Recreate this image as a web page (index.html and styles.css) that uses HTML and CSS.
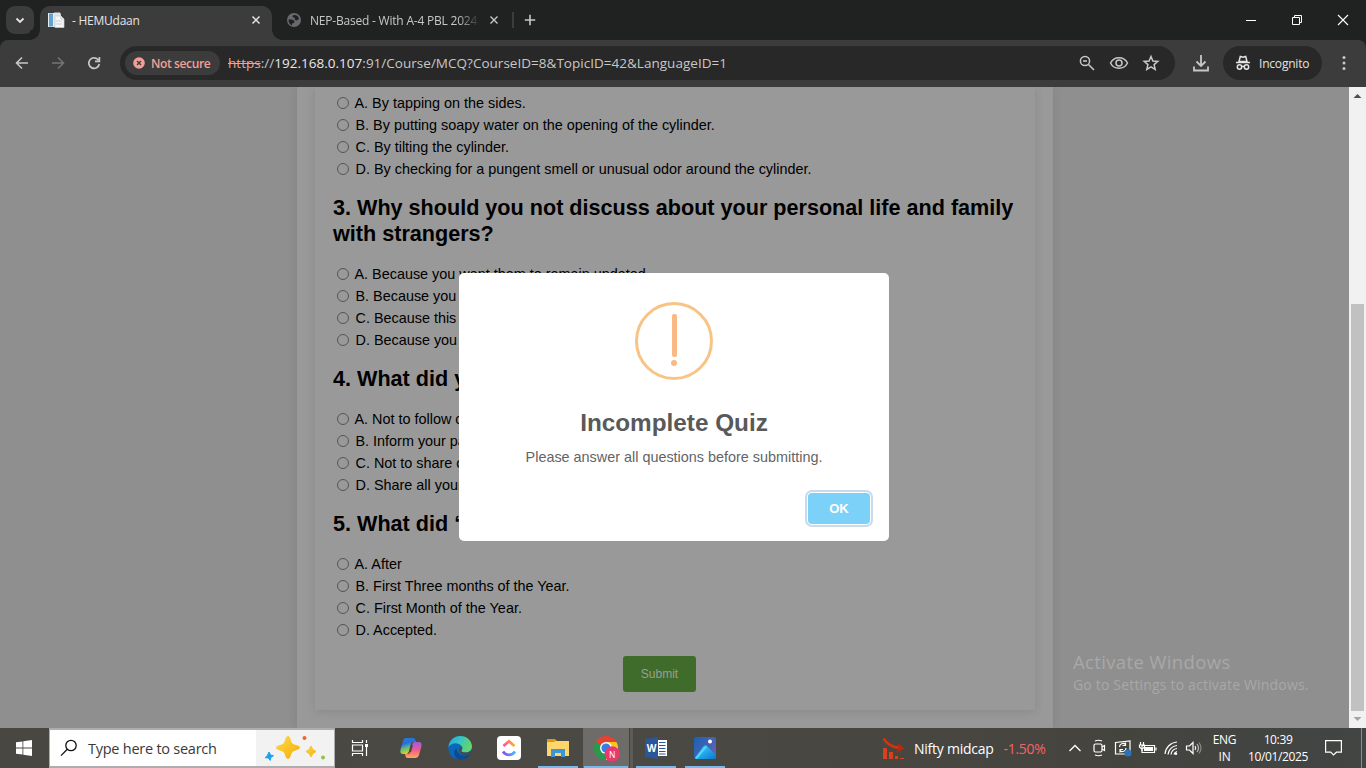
FILE: index.html
```html
<!DOCTYPE html>
<html lang="en">
<head>
<meta charset="utf-8">
<title>HEMUdaan</title>
<link rel="stylesheet" href="styles.css">
</head>
<body>
<header class="tabs">
  <div class="tab-search"><svg width="28" height="28" viewBox="0 0 28 28"><path d="M10.500 12.500l3.500 3.500 3.500-3.500" fill="none" stroke="#e3e3e3" stroke-width="1.800"/></svg></div>
  <div class="tab active">
    <svg class="fav" width="17" height="16" viewBox="0 0 17 16"><path d="M0 1h8v14H0z" fill="#e9edf0"/><path d="M1 1.500h4v13H1z" fill="#5fa3d3"/><path d="M6 .500h6l1 2v12H6z" fill="#e2e4e5"/><path d="M7 4h6l3 3v8.500H7z" fill="#f6f6f6" stroke="#c9ced2" stroke-width=".7"/><path d="M13 4v3h3M8 9h6M8 12h6" fill="none" stroke="#c9ced2"/></svg>
    <span class="tab-title first">- HEMUdaan</span>
    <svg class="close" width="10" height="10" viewBox="0 0 10 10"><path d="M1.500 1.500l7 7M8.500 1.500l-7 7" stroke="#e3e3e3" stroke-width="1.500"/></svg>
  </div>
  <div class="tab idle">
    <svg class="fav2" width="14" height="14" viewBox="0 0 14 14"><circle cx="7" cy="7" r="7" fill="#666a6e"/><path d="M1.500 6.500h3.500l2.500 1.500-.5 2-2 .500v2Q1.500 10.500 1.500 6.500zM6 2.200q3-1 5 1.300l1 2.500-2.500 1.500-2-1L8 5 5.500 4z" fill="#202221"/></svg>
    <span class="tab-title second">NEP-Based - With A-4 PBL 2024</span>
    <svg class="close2" width="10" height="10" viewBox="0 0 10 10"><path d="M1.500 1.500l7 7M8.500 1.500l-7 7" stroke="#c7c7c7" stroke-width="1.400"/></svg>
  </div>
  <i class="tab-divider"></i>
  <svg class="plus" width="12" height="12" viewBox="0 0 12 12"><path d="M6 .8v10.400M.8 6h10.400" stroke="#c7c7c7" stroke-width="1.600"/></svg>
  <div class="window-controls">
    <svg width="46" height="40" viewBox="0 0 46 40"><path d="M18 20.500h10" stroke="#fff"/></svg>
    <svg width="46" height="40" viewBox="0 0 46 40"><path d="M18.500 17.500h7v7h-7zM20.500 17.500v-2h7v7h-2" fill="none" stroke="#fff"/></svg>
    <svg width="46" height="40" viewBox="0 0 46 40"><path d="M18 15l10 10M28 15L18 25" stroke="#fff" stroke-width="1.100"/></svg>
  </div>
</header>
<nav class="toolbar">
  <div class="nav-icons">
    <svg width="36" height="36" viewBox="0 0 36 36"><path d="M24 18H13M18 12.500L12.500 18l5.500 5.500" fill="none" stroke="#c7c7c7" stroke-width="1.600"/></svg>
    <svg width="36" height="36" viewBox="0 0 36 36"><path d="M12 18h11M18 12.500l5.500 5.500-5.500 5.500" fill="none" stroke="#747474" stroke-width="1.600"/></svg>
    <svg width="36" height="36" viewBox="0 0 36 36"><path d="M22.400 15A5.300 5.300 0 1 0 23.300 19M23.400 12v4.300h-4.400" fill="none" stroke="#c7c7c7" stroke-width="1.700"/></svg>
  </div>
  <div class="address">
    <div class="insecure"><svg width="12" height="12" viewBox="0 0 12 12"><circle cx="6" cy="6" r="5.800" fill="#f2a097"/><path d="M4 4l4 4M8 4L4 8" stroke="#3c3c3c" stroke-width="1.400"/></svg><span>Not secure</span></div>
    <div class="url"><span class="scheme">https</span>://<span class="host">192.168.0.107</span>:91/Course/MCQ?CourseID=8&amp;TopicID=42&amp;LanguageID=1</div>
    <div class="address-icons">
      <svg width="32" height="32" viewBox="0 0 32 32"><g fill="none" stroke="#c7c7c7" stroke-width="1.500"><circle cx="14" cy="14" r="4.600"/><path d="M17.500 17.500l5.500 5.500M12 14h4"/></g></svg>
      <svg width="32" height="32" viewBox="0 0 32 32"><g fill="none" stroke="#c7c7c7" stroke-width="1.500"><path d="M7.500 16c3.500-7 13.500-7 17 0-3.500 7-13.500 7-17 0z"/><circle cx="16" cy="16" r="3"/></g></svg>
      <svg width="32" height="32" viewBox="0 0 32 32"><path d="M16 9.500l1.900 4.500 4.900.4-3.700 3.200 1.100 4.800-4.200-2.500-4.200 2.500 1.100-4.800-3.700-3.200 4.900-.4z" fill="none" stroke="#c7c7c7" stroke-width="1.500"/></svg>
    </div>
  </div>
  <svg class="download" width="18" height="18" viewBox="0 0 18 18"><path d="M9 1v11M4.500 7.500L9 12l4.500-4.500M2 12.500v4h14v-4" fill="none" stroke="#c7c7c7" stroke-width="1.800"/></svg>
  <div class="incognito"><svg width="16" height="16" viewBox="0 0 16 16"><path d="M4 6.500l1.300-5 2.700.7 2.700-.7 1.300 5zM1 7.500h14" fill="none" stroke="#e3e3e3" stroke-width="1.500"/><g fill="none" stroke="#e3e3e3" stroke-width="1.500"><circle cx="4.500" cy="12" r="2.200"/><circle cx="11.500" cy="12" r="2.200"/><path d="M6.500 11.600q1.500-.8 3 0"/></g></svg><span>Incognito</span></div>
  <svg class="dots" width="4" height="16" viewBox="0 0 4 16"><g fill="#c7c7c7"><circle cx="2" cy="2.500" r="1.500"/><circle cx="2" cy="8" r="1.500"/><circle cx="2" cy="13.500" r="1.500"/></g></svg>
</nav>
<main class="viewport">
  <div class="page">
    <section class="container">
      <form class="quiz">
        <ul class="options">
          <li><i></i>A. By tapping on the sides.</li>
          <li><i></i>B. By putting soapy water on the opening of the cylinder.</li>
          <li><i></i>C. By tilting the cylinder.</li>
          <li><i></i>D. By checking for a pungent smell or unusual odor around the cylinder.</li>
        </ul>
        <h2>3. Why should you not discuss about your personal life and family with strangers?</h2>
        <ul class="options">
          <li><i></i>A. Because you want them to remain updated.</li>
          <li><i></i>B. Because you</li>
          <li><i></i>C. Because this</li>
          <li><i></i>D. Because you</li>
        </ul>
        <h2>4. What did y</h2>
        <ul class="options">
          <li><i></i>A. Not to follow c</li>
          <li><i></i>B. Inform your pa</li>
          <li><i></i>C. Not to share c</li>
          <li><i></i>D. Share all your</li>
        </ul>
        <h2>5. What did ‘</h2>
        <ul class="options">
          <li><i></i>A. After</li>
          <li><i></i>B. First Three months of the Year.</li>
          <li><i></i>C. First Month of the Year.</li>
          <li><i></i>D. Accepted.</li>
        </ul>
        <button type="button" class="submit">Submit</button>
      </form>
    </section>
    <div class="overlay">
      <div class="modal" role="dialog">
        <div class="warning"><i class="bar"></i><i class="dot"></i></div>
        <div class="modal-title">Incomplete Quiz</div>
        <div class="modal-text">Please answer all questions before submitting.</div>
        <button type="button" class="ok">OK</button>
      </div>
    </div>
    <div class="watermark"><div class="wm-title">Activate Windows</div><div class="wm-text">Go to Settings to activate Windows.</div></div>
  </div>
  <div class="scrollbar">
    <svg width="17" height="17" viewBox="0 0 17 17"><path d="M4.500 11h8l-4-4z" fill="#505050"/></svg>
    <div class="thumb"></div>
    <svg width="17" height="17" viewBox="0 0 17 17"><path d="M4.500 6h8l-4 4z" fill="#a3a3a3"/></svg>
  </div>
</main>
<footer class="taskbar">
  <div class="start"><svg width="16" height="16" viewBox="0 0 16 16"><path d="M0 2.300l6.500-.9v6.200H0zM7.300 1.300L16 0v7.600H7.300zM0 8.400h6.500v6.200L0 13.700zM7.300 8.400H16V16l-8.700-1.300z" fill="#fff"/></svg></div>
  <div class="search">
    <svg class="glass" width="18" height="18" viewBox="0 0 18 18"><circle cx="11" cy="6.500" r="5.200" fill="none" stroke="#111" stroke-width="1.300"/><path d="M7.300 10.300L1 16.600" stroke="#111" stroke-width="1.300"/></svg>
    <span>Type here to search</span>
    <div class="sparkles"><svg width="78" height="36" viewBox="0 0 78 36"><defs><linearGradient id="gold" x2="1" y2="1"><stop stop-color="#ffd94b"/><stop offset="1" stop-color="#f3ae05"/></linearGradient></defs><path d="M32 6c2.500 0 2.800 6 4.500 7.500s7.500 2 7.500 4-6 3-7.500 4.500-2 7-4.500 7-3-5.500-4.500-7-7.500-2-7.500-4.300 6-2.700 7.500-4.200 2-7.500 4.500-7.500z" fill="url(#gold)"/><path d="M55 16q1 4 5 5.500-4 1.500-5 5.500-1-4-5-5.500 4-1.500 5-5.500z" fill="url(#gold)" stroke="#f6c22c"/><path d="M13 22l1.500 3 3 .7-2.600 1.700-.7 3-1.900-2.500-3.200-.2 2.300-2.200z" fill="#20a0ea" stroke="#20a0ea"/><circle cx="48.500" cy="8" r="2" fill="#f1652c"/><circle cx="67" cy="27.500" r="2" fill="#8ec641"/></svg></div>
  </div>
  <div class="apps">
    <div class="app first-app"><svg width="18" height="18" viewBox="0 0 18 18"><path d="M1.500 1v2.500h10V1M1.500 6h10v6h-10zM1.500 17v-2.500h10V17M15.500 1v3M15.500 8v9" fill="none" stroke="#fff" stroke-width="1.200"/><path d="M14 5h3v3h-3z" fill="#fff"/></svg></div>
    <div class="app"><svg width="24" height="24" viewBox="0 0 24 24"><defs><linearGradient id="ca" x2=".3" y2="1"><stop stop-color="#1687d6"/><stop offset=".4" stop-color="#2c6bdc"/><stop offset=".65" stop-color="#55b98a"/><stop offset="1" stop-color="#e8cf1f"/></linearGradient><linearGradient id="cb" x2="0" y2="1"><stop stop-color="#9b5de0"/><stop offset=".5" stop-color="#ee5c8e"/><stop offset="1" stop-color="#ffab54"/></linearGradient></defs><path d="M7 2h7c2 0 2.300 2 3 4h-3c-2 0-2.500 3-3 5l-1 4c-.5 2-1.500 3-3 3H4c-3 0-3-3-2-6l2-7c.5-2 1.500-3 3-3z" fill="url(#ca)"/><path d="M16 22H9c-2 0-2.300-1-3-4h3c2 0 2.500-3 3-5l1-4c.5-2 1.500-3 3-3h4c3 0 3 3 2 6l-2 7c-.5 2-2 3-4 3z" fill="url(#cb)"/><path d="M12 9h2l-2 7h-2z" fill="#494943"/></svg></div>
    <div class="app"><svg width="24" height="24" viewBox="0 0 24 24"><defs><linearGradient id="ed" x2="1" y2=".3"><stop stop-color="#20a6dc"/><stop offset=".5" stop-color="#35c4c6"/><stop offset="1" stop-color="#63d56b"/></linearGradient></defs><circle cx="12" cy="12" r="11.700" fill="#0b68b9"/><path d="M.4 11C1 4.500 6 0 12.300 0 19 0 24 5 24 10.500c0 4-3.500 6-7 6-3 0-4.300-1-3.500-2 1-1.200 1-3 0-4.500C10 6 4 6.500.4 11z" fill="url(#ed)"/><path d="M8.500 12c0 5 4.500 8 9 7.500 2-.2 3.500-.8 5-1.700-2 4-6 6.200-10.500 6.200-5.500-1-8-8-3.500-12z" fill="#0a4b93"/><path d="M13.700 10.500c2 3-2 3.500.2 5.200 2 1.400 6.500 1 8.700-.7l1 1.500c-2 2.800-7 3-10 1.500s-3.500-5.500.1-7.500z" fill="#494943"/></svg></div>
    <div class="app"><svg width="24" height="24" viewBox="0 0 24 24"><defs><linearGradient id="cu"><stop stop-color="#ff4fa0"/><stop offset="1" stop-color="#ffb21d"/></linearGradient><linearGradient id="cd"><stop stop-color="#874df4"/><stop offset="1" stop-color="#43b8fa"/></linearGradient></defs><rect width="24" height="24" rx="4" fill="#fff"/><path d="M6.500 10L12 5.300l5.500 4.700" fill="none" stroke="url(#cu)" stroke-width="2.700"/><path d="M6 15.500c3 4.500 9 4.500 12 0" fill="none" stroke="url(#cd)" stroke-width="2.700"/></svg></div>
    <div class="app open"><svg width="22" height="20" viewBox="0 0 22 20"><path d="M0 1h8l2 2h11v3H0z" fill="#d99b13"/><path d="M0 4h7l2-1h13v15H0z" fill="#ffd669"/><path d="M4 19v-8h14v8h-4v-4H8v4z" fill="#3c95d4"/></svg></div>
    <div class="app open current"><svg width="27" height="27" viewBox="0 0 27 27"><path d="M12 12L1.600 6A12 12 0 0 1 22.400 6z" fill="#e64234"/><path d="M12 12L1.600 6A12 12 0 0 0 12 24z" fill="#279b4b"/><path d="M12 12v12A12 12 0 0 0 22.400 6H12z" fill="#fac81c"/><circle cx="12" cy="12" r="6" fill="#fff"/><circle cx="12" cy="12" r="4.600" fill="#367de4"/><circle cx="18.200" cy="18" r="7.700" fill="#e93872"/><text class="badge" x="18.200" y="21.500" text-anchor="middle">N</text></svg></div>
    <div class="app open"><svg width="23" height="22" viewBox="0 0 23 22"><path d="M11 3h11v16H11z" fill="#fff"/><path d="M14 5.500h6.500M14 8.500h6.500M14 11.500h6.500M14 14.500h6.500M14 17h6.500" stroke="#2a569a" stroke-width="1.200"/><path d="M0 2l13-2v22L0 20z" fill="#2a569a"/><text class="word" x="6.500" y="15" text-anchor="middle">W</text></svg></div>
    <div class="app open"><svg width="22" height="22" viewBox="0 0 22 22"><defs><linearGradient id="ph" x2="1" y2=".7"><stop stop-color="#1763b5"/><stop offset="1" stop-color="#6361b2"/></linearGradient><linearGradient id="pm" x2="1" y2="1"><stop stop-color="#45d7ff"/><stop offset="1" stop-color="#0878d1"/></linearGradient></defs><rect width="22" height="22" rx="2" fill="url(#ph)"/><path d="M1 21l8-11q2-3 4-1l9 9v2q0 2-2 2H2z" fill="url(#pm)"/><path d="M1 21l9-11q1.500-1.500 3 0L3 22z" fill="#4bd8fb"/><circle cx="16" cy="4.500" r="2" fill="#fff"/></svg></div>
  </div>
  <div class="news"><svg width="23" height="23" viewBox="0 0 23 23"><path d="M1 11h4v11H1zM7 15h4v7H7zM13 19h3v3h-3zM18 21h4v1h-4z" fill="#d9401c"/><path d="M1.500 1.500c3 5 9 9 17 9.500" fill="none" stroke="#d33310" stroke-width="2.500"/><path d="M16 6l6.500 5.500L14 16l2.500-4.500z" fill="#b92811"/></svg><span>Nifty midcap</span><b>-1.50%</b></div>
  <div class="tray">
    <svg width="24" height="20" viewBox="0 0 24 20"><path d="M6.500 13l5.500-5.500 5.500 5.500" fill="none" stroke="#fff" stroke-width="1.300"/></svg>
    <svg width="24" height="20" viewBox="0 0 24 20"><g fill="none" stroke="#fff" stroke-width="1.200"><rect x="7" y="6" width="8" height="8" rx="1.500"/><path d="M15 9l2.500-1.500v5L15 11M8 3q3.500-1.500 7 0M8 17q3.500 1.500 7 0"/></g></svg>
    <svg width="24" height="20" viewBox="0 0 24 20"><g fill="none" stroke="#fff" stroke-width="1.200"><path d="M4.500 4.500L19 3v13H4.500zM8.500 9a3.500 3.500 0 0 1 6-2.500M14.500 4.500v3h-3M15 10a3.500 3.500 0 0 1-6 2.500M9 14.500v-3h3"/></g><circle cx="17" cy="15" r="3.600" fill="#2a73bd"/></svg>
    <svg width="24" height="20" viewBox="0 0 24 20"><path d="M7 7.500h12.500v7H7zM21 9.500v3" fill="none" stroke="#fff" stroke-width="1.200"/><path d="M9 9h9v4H9z" fill="#fff"/><path d="M5.500 4v3M8.500 4v3M4.500 7h5v2q-2.500 3-5 0zM7 10v3" fill="none" stroke="#fff" stroke-width="1.200"/></svg>
    <svg width="24" height="20" viewBox="0 0 24 20"><g fill="none" stroke="#fff" stroke-width="1.200"><path d="M6 16A13 13 0 0 1 18 4M9 16.500A10 10 0 0 1 18 7.500M12 16.500A7 7 0 0 1 18 10.500M15 16.500a4 4 0 0 1 3-3"/></g><circle cx="17" cy="15.800" r="1.200" fill="#fff"/></svg>
    <svg width="24" height="20" viewBox="0 0 24 20"><g fill="none" stroke="#fff" stroke-width="1.200"><path d="M3.500 8h3L10 4.500v11L6.500 12h-3zM12 8q1.500 2 0 4"/><path d="M14 6q3 4 0 8" stroke="#bbb"/><path d="M16 4.500q4 5.500 0 11" stroke="#898985"/></g></svg>
  </div>
  <div class="language"><span>ENG</span><span>IN</span></div>
  <div class="clock"><span>10:39</span><span class="date">10/01/2025</span></div>
  <svg class="notice" width="17" height="18" viewBox="0 0 17 18"><path d="M.6 1.600h15.800v11.600h-5L8.500 16 5.700 13.200H.6z" fill="none" stroke="#fff" stroke-width="1.200"/></svg>
  <i class="show-desktop"></i>
</footer>
</body>
</html>
```
FILE: styles.css
```css
* { box-sizing: border-box; }
body { margin: 0; width: 1366px; height: 768px; overflow: hidden; display: flex; flex-direction: column; font-family: "Open Sans", "Noto Sans", sans-serif; background: #202221; }
svg { display: block; flex: none; }
ul { list-style: none; margin: 0; padding: 0; }
span, .url, b { white-space: nowrap; }

.tabs { height: 40px; flex: none; display: flex; align-items: center; background: #202221; color: #e3e3e3; font-size: 12px; }
.tab-search { width: 28px; height: 28px; margin-left: 6px; border-radius: 9px; background: #3c3c3c; }
.tab { display: flex; align-items: center; height: 34px; }
.active { width: 232px; margin: 6px 0 0 6px; padding: 0 11px 6px 8px; background: #3c3c3c; border-radius: 10px 10px 0 0; position: relative; }
.active::before, .active::after { content: ""; position: absolute; bottom: 0; width: 10px; height: 10px; }
.active::before { left: -10px; background: radial-gradient(circle at 0 0, #202221 9.500px, #3c3c3c 10px); }
.active::after { right: -10px; background: radial-gradient(circle at 100% 0, #202221 9.500px, #3c3c3c 10px); }
.first { margin-left: 7px; letter-spacing: -.25px; }
.close { margin-left: auto; }
.idle { margin-left: 15px; width: 212px; color: #c7c7c7; }
.second { margin-left: 9px; width: 168px; overflow: hidden; letter-spacing: -.21px; -webkit-mask-image: linear-gradient(90deg, #000 148px, transparent 170px); }
.close2 { margin-left: 11px; }
.tab-divider { width: 2px; height: 16px; margin-left: 13px; background: #3c3c3c; }
.plus { margin-left: 10px; }
.window-controls { display: flex; margin-left: auto; }

.toolbar { height: 47px; flex: none; display: flex; align-items: center; background: #3c3c3c; border-radius: 8px 8px 0 0; padding-bottom: 1px; }
.nav-icons { display: flex; margin-left: 4px; width: 116px; }
.address { display: flex; align-items: center; width: 1055px; height: 34px; border-radius: 17px; background: #282828; padding: 0 8px 0 5px; }
.insecure { display: flex; align-items: center; width: 95px; height: 24px; border-radius: 12px; background: #3c3c3c; padding-left: 8px; gap: 6px; color: #f2a097; font-size: 12px; font-weight: 600; }
.insecure span { letter-spacing: -.38px; }
.url { margin-left: 8px; font-size: 13.500px; color: #c7c7c7; letter-spacing: .02px; }
.scheme { color: #f2a097; text-decoration: line-through; }
.host { color: #e8e8e8; }
.address-icons { display: flex; margin-left: auto; }
.download { margin-left: 17px; }
.incognito { display: flex; align-items: center; width: 99px; height: 34px; margin-left: 13px; border-radius: 17px; background: #282828; padding-left: 12px; gap: 8px; color: #e3e3e3; font-size: 12px; }
.incognito span { letter-spacing: -.2px; }
.dots { margin-left: 20px; }

.viewport { height: 641px; flex: none; display: flex; }
.page { width: 1349px; position: relative; display: flex; justify-content: center; background: #8f8f8f; font-family: "Liberation Sans", Arial, sans-serif; overflow: hidden; }
.container { width: 756px; margin-left: 1px; height: 641px; padding: 0 18px 18px; background: #999; box-shadow: 0 0 9px rgba(0, 0, 0, .1); }
.quiz { height: 623px; padding: 5px 18px 18px; box-shadow: 0 2px 9px rgba(0, 0, 0, .1); clip-path: inset(0 -12px -12px -12px); background: #999; display: flex; flex-direction: column; }
.options { font-size: 14.400px; line-height: 22px; color: #000; }
.options li { display: flex; align-items: center; height: 22px; white-space: nowrap; }
.options i { width: 12px; height: 12px; border: 1px solid #555; border-radius: 50%; margin: 0 6.500px 1px 4px; flex: none; }
.options li:first-child i { margin-right: 5.500px; }
h2 { margin: 15px 0 16px; font-size: 21.600px; line-height: 26px; color: #000; }
.submit { width: 73px; height: 36px; margin: 15px 0 0 290px; border: 0; border-radius: 3px; background: #3f6b2b; color: #999f96; font: 12px "Liberation Sans", Arial, sans-serif; padding: 0; }
.overlay { position: absolute; inset: 0; }
.modal { position: absolute; left: 459px; top: 186px; width: 430px; height: 268px; border-radius: 5px; background: #fff; display: flex; flex-direction: column; align-items: center; padding-top: 29px; }
.warning { width: 78px; height: 78px; border: 3px solid #f8c486; border-radius: 50%; display: flex; flex-direction: column; align-items: center; padding-top: 9px; }
.bar { width: 5px; height: 43px; border-radius: 2px; background: #f9b884; }
.dot { width: 6px; height: 6px; margin-top: 3px; border-radius: 50%; background: #f9b884; }
.modal-title { margin-top: 29px; font-size: 24.300px; line-height: 28px; font-weight: 700; color: #595959; }
.modal-text { margin-top: 11px; font-size: 14.400px; line-height: 18px; color: #646464; }
.ok { width: 62px; height: 31px; margin: 27px 19px 0 auto; padding: 0; border: 0; border-radius: 4px; background: #7cd1f9; box-shadow: 0 0 0 1px #fff, 0 0 0 3px #c6dcec; color: #fff; font: bold 13px "Liberation Sans", Arial, sans-serif; }
.watermark { position: absolute; left: 1073px; top: 561px; color: #a8a8a8; font-family: "Open Sans", sans-serif; white-space: nowrap; }
.wm-title { font-size: 18.500px; line-height: 28px; letter-spacing: .36px; }
.wm-text { font-size: 14px; line-height: 18px; letter-spacing: .18px; }
.scrollbar { width: 17px; background: #f1f1f1; display: flex; flex-direction: column; justify-content: space-between; }
.thumb { width: 13px; height: 407px; margin: 200px 0 0 2px; background: #c1c1c1; }

.taskbar { height: 40px; flex: none; display: flex; align-items: center; background: linear-gradient(90deg, #484741, #4a4943 45%, #45443f 80%, #414543); color: #fff; font-size: 12px; }
.start { width: 49px; padding-left: 16px; }
.search { width: 286px; height: 40px; border: 1px solid #adadad; border-width: 2px 1px; background: #fff; display: flex; align-items: center; color: #3a3a3a; font-size: 14.500px; }
.glass { margin-left: 10px; }
.search span { margin-left: 10px; letter-spacing: -.25px; }
.sparkles { margin-left: auto; width: 78px; height: 36px; background: #f2f2f2; }
.apps { display: flex; gap: 5px; margin-left: 5px; }
.app { width: 44px; height: 40px; display: grid; place-items: center; background-position: bottom; background-repeat: no-repeat; }
.first-app { padding-right: 4px; }
.open { background-image: linear-gradient(#76b9ed, #76b9ed); background-size: 40px 2px; }
.current { margin-left: -2px; width: 46px; background-color: #6d6c68; background-size: 44px 2px; box-shadow: 1px 0 #44433e, 4px 0 #5c5b56; padding-left: 3px; padding-top: 2px; }
.badge { font: 8.500px "Open Sans", sans-serif; fill: #fff; }
.word { font: bold 10px "Open Sans", sans-serif; fill: #fff; }
.news { display: flex; align-items: center; margin-left: 155px; width: 181px; font-size: 14px; }
.news span { margin-left: 9px; letter-spacing: -.25px; }
.news b { margin-left: 10px; font-weight: 400; color: #f2646c; letter-spacing: -.3px; }
.tray { display: flex; }
.language, .clock { display: flex; flex-direction: column; align-items: center; line-height: 17px; letter-spacing: -.3px; }
.language { width: 35px; }
.clock { width: 72px; letter-spacing: -.37px; padding-bottom: 1px; }
.notice { margin-left: 11px; }
.show-desktop { width: 1px; height: 40px; margin-left: auto; margin-right: 4px; background: #8b8c89; }
```
